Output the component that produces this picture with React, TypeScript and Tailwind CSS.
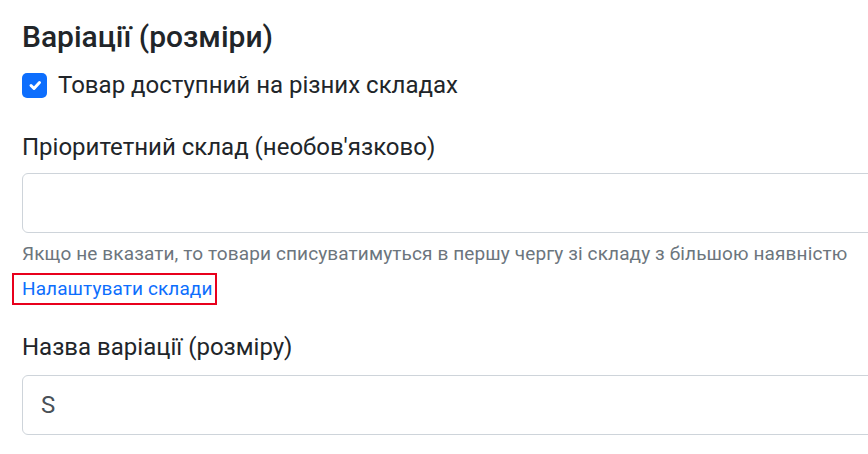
const App = () => {
  return (
    <div className="min-h-[454px] w-[868px] overflow-hidden bg-white font-['Roboto',sans-serif] text-[#212529]">
      {/* variations block */}
      <section className="w-[900px] pl-[22px] pt-[20px]">
        {/* title */}
        <h2 className="text-[30px] font-medium leading-[34px]">Варіації (розміри)</h2>
        {/* checkbox */}
        <label className="mt-[15px] flex h-[32px] items-center gap-[11px]">
          <span className="flex h-[25px] w-[25px] items-center justify-center rounded-[5px] bg-[#0d6efd]">
            <svg viewBox="0 0 20 20" className="h-[20px] w-[20px]" fill="none">
              <path d="M6 10.5l3 3l5.5-6" stroke="#fff" strokeWidth="3" strokeLinecap="round" strokeLinejoin="round" />
            </svg>
          </span>
          <span className="text-[24px] leading-[32px]">Товар доступний на різних складах</span>
        </label>
        {/* priority warehouse */}
        <div className="mt-[29px] text-[24px] leading-[34px]">Пріоритетний склад (необов'язково)</div>
        <div className="mt-[9px] h-[60px] rounded-[6px] border border-[#ced4da] bg-white"></div>
        <p className="mt-[8px] text-[19px] leading-[26px] tracking-[0.12px] text-[#6c757d]">
          Якщо не вказати, то товари списуватимуться в першу чергу зі складу з більшою наявністю
        </p>
        {/* link */}
        <div className="mt-[6px] -ml-[10px] inline-flex border-2 border-[#e8001c] py-[1px] pl-[8px] pr-[3px]">
          <span className="text-[19px] leading-[26px] tracking-[0.1px] text-[#0d6efd]">Налаштувати склади</span>
        </div>
        {/* variation name */}
        <div className="mt-[25px] text-[24px] leading-[34px]">Назва варіації (розміру)</div>
        <div className="mt-[11px] flex h-[60px] items-center rounded-[6px] border border-[#ced4da] bg-white px-[18px] text-[24px] text-[#495057]">
          S
        </div>
      </section>
    </div>
  );
};

export default App;
